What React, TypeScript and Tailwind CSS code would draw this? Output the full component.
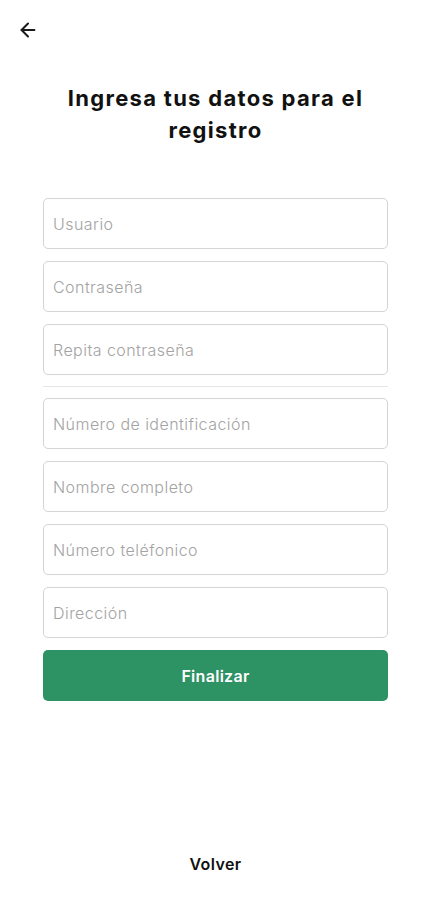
import { ArrowLeft } from "lucide-react";

const fields = [
  { label: "Usuario", type: "text" },
  { label: "Contraseña", type: "password" },
  { label: "Repita contraseña", type: "password" },
];

const personal = [
  "Número de identificación",
  "Nombre completo",
  "Número teléfonico",
  "Dirección",
];

const Field = ({ placeholder, type = "text" }: { placeholder: string; type?: string }) => (
  <input
    type={type}
    placeholder={placeholder}
    className="h-[51px] w-full rounded-[5px] border border-[#d4d4d4] bg-white px-[9px] text-[16px] font-light tracking-[0.45px] text-[#333] placeholder:text-[#a3a3a3] outline-none"
  />
);

export default function App() {
  return (
    <div
      className="flex min-h-[900px] w-full flex-col bg-white"
      style={{ fontFamily: "Inter, 'Noto Sans', sans-serif" }}
    >
      <div className="px-[17px] pt-[19px]">
        <button className="flex h-[22px] w-[22px] items-center justify-center text-[#1a1a1a]">
          <ArrowLeft size={22} strokeWidth={2.2} />
        </button>
      </div>

      <h1 className="mx-auto mt-[41px] w-[350px] text-center text-[22px] font-bold leading-[32px] tracking-[1.3px] text-[#111]">
        Ingresa tus datos para el registro
      </h1>

      <form className="mx-[43px] mt-[52px] flex flex-col gap-[12px]">
        {fields.map((f) => (
          <Field key={f.label} placeholder={f.label} type={f.type} />
        ))}
        <hr className="-my-[1px] border-t border-[#e6e6e6]" />
        {personal.map((p) => (
          <Field key={p} placeholder={p} />
        ))}
        <button
          type="button"
          className="h-[51px] w-full rounded-[5px] bg-[#2d9264] text-[16px] font-semibold tracking-[0.3px] text-white"
        >
          Finalizar
        </button>
      </form>

      <div className="mt-auto pb-[24px] text-center">
        <button className="text-[16px] font-semibold tracking-[0.4px] text-[#111]">Volver</button>
      </div>
    </div>
  );
}
